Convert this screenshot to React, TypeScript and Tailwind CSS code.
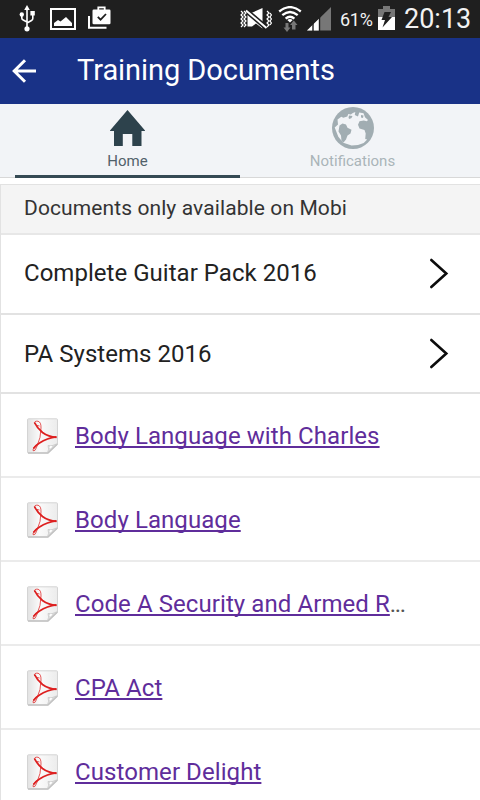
import React from 'react';

const FOLDERS = [
  { id: 'guitar', title: 'Complete Guitar Pack 2016', height: 'h-20 pb-0.5' },
  { id: 'pa', title: 'PA Systems 2016', height: 'h-[79px]' },
];

const DOCUMENTS = [
  { id: 'charles', title: 'Body Language with Charles' },
  { id: 'body', title: 'Body Language' },
  { id: 'code-a', title: 'Code A Security and Armed R', truncated: true },
  { id: 'cpa', title: 'CPA Act' },
  { id: 'delight', title: 'Customer Delight' },
];

function UsbIcon() {
  return (
    <svg className="h-7 w-4" viewBox="0 0 16 28" fill="none" stroke="#fff" strokeWidth="1.6">
      <path d="M8 4v19M2.8 9.5v3.5q0 1.4 1.4 2L8 17M13.8 9v4.5q0 1.3-1.3 2L8 18" />
      <circle cx="8" cy="23.8" r="2.6" fill="#fff" stroke="none" />
      <circle cx="2.8" cy="9.5" r="2.2" fill="#fff" stroke="none" />
      <path d="M8 0l2.8 5H5.2zM11.4 6h4.4v4.4h-4.4z" fill="#fff" stroke="none" />
    </svg>
  );
}

function PictureIcon() {
  return (
    <svg className="h-[22px] w-[26px]" viewBox="0 0 26 22">
      <path d="M1 1h24v20H1z" fill="none" stroke="#fff" strokeWidth="2" />
      <path d="M4 18v-3l4-3 2.5 1.5L16 9l6 6v3z" fill="#fff" />
    </svg>
  );
}

function WorkIcon() {
  return (
    <svg className="h-[23px] w-[23px]" viewBox="0 0 23 23">
      <path d="M1 10v11.7h17.5" fill="none" stroke="#fff" strokeWidth="2" />
      <path d="M10.3 4V1.3h6.4V4" fill="none" stroke="#fff" strokeWidth="1.8" />
      <rect x="4.5" y="3.5" width="18" height="14.8" rx="1.3" fill="#fff" />
      <path d="M9.8 10.8l2.8 2.8 5.4-5.6" fill="none" stroke="#1f1f1f" strokeWidth="1.8" />
    </svg>
  );
}

function MuteVibrateIcon() {
  return (
    <svg className="h-[22px] w-8" viewBox="0 0 32 22" fill="none" stroke="#fff">
      <path d="M7.5 4.5h5L22.5 0v20.5L16 15.5 12 18.5H7.5z" fill="#fff" stroke="none" />
      <path d="M5 1.5L26.5 20" stroke="#1f1f1f" strokeWidth="5" />
      <path d="M6 2.4L26.5 20" strokeWidth="2" />
      <path d="M1 3l2 2-2 2 2 2-2 2 2 2-2 2 2 2-2 2M4 3l2 2-2 2 2 2-2 2 2 2-2 2 2 2-2 2" strokeWidth="1.2" />
      <path d="M27 3l2 2-2 2 2 2-2 2 2 2-2 2 2 2-2 2M30 5l1.4 2L30 9l1.4 2-1.4 2 1.4 2-1.4 2" strokeWidth="1.2" />
    </svg>
  );
}

function WifiIcon() {
  return (
    <svg className="h-[27px] w-6" viewBox="0 0 24 27">
      <g fill="none" stroke="#fff" strokeWidth="2.3">
        <path d="M1.2 5.5Q12-3.3 22.8 5.5" />
        <path d="M4.3 9.2Q12 2.8 19.7 9.2" />
        <path d="M7.6 12.6Q12 8.9 16.4 12.6" />
      </g>
      <path d="M9.3 14q2.7-2 5.4 0L12 16.5z" fill="#fff" />
      <path d="M7.5 17h3v4.5h2L9 26l-3.5-4.5h2zM14 23.5V19h-2l3.8-4.5L19.5 19h-2v4.5z" fill="#777" />
    </svg>
  );
}

function SignalIcon() {
  return (
    <svg className="h-6 w-6" viewBox="0 0 24 24">
      <path d="M0 23.5L24 0v23.5z" fill="#777" />
      <path d="M0 23.5l12.5-12.2v12.2z" fill="#fff" />
      <path d="M6 15v9M12.5 9v15" stroke="#1f1f1f" strokeWidth="1.4" />
    </svg>
  );
}

function BatteryIcon() {
  return (
    <svg className="h-6 w-[17px]" viewBox="0 0 17 24">
      <path d="M5 0h7v3h5v9H0V3h5z" fill="#777" />
      <path d="M0 11h17v13H0z" fill="#fff" />
      <path d="M6.5 6H13l-2.5 5H14L4.5 21.5 7 14H3.5z" fill="#1f1f1f" />
    </svg>
  );
}

function BackIcon() {
  return (
    <svg className="h-6 w-6" viewBox="0 0 24 24" fill="none" stroke="#fff" strokeWidth="3">
      <path d="M24 12H2.5M13 1.2L2.2 12 13 22.8" />
    </svg>
  );
}

function HomeIcon() {
  return (
    <svg className="h-9 w-9" viewBox="0 0 36 36">
      <path d="M17.500 0L35 20.500V21h-3.500v15h-9.200V24h-9.500v12H4V21H0v-.5z" fill="#2d424c" />
    </svg>
  );
}

function GlobeIcon() {
  return (
    <svg className="h-11 w-11" viewBox="0 0 44 44">
      <circle cx="22" cy="22" r="21" fill="#a1adb2" />
      <path
        d="M3.7 21.5L7 18.5l-.5-5 3.8-2.8 2 1 4-1.2 1-2.500 2.500.5 2-1.500 2.500-1-.5 3 3.200 1.500 1.200-4 4.300.8 1.500 4 3 2.700-1.200 1.300-3-.8-4.300.8-1.500 3.400 1.500 3.800 5 1.500 1.200 3.500-.5 5.500 2 .5-3.500 3.500-5.700 2-6.400.6-8.300-2.800-5-6z"
        fill="#f2f4f7"
      />
      {/* South America and the Arctic islands */}
      <path d="M8.5 19.5l3-2 3.5 1 1.5 3.2 4 2-1 3.8-3 2-1.5 4-2.5 3-2-1.5-.5-5.5-2.500-4z" fill="#a1adb2" />
      <path d="M18 9.5l3.5.5-1 2-2 1-1-1zM30 9l2.500.5-.5 2.500-2-.5z" fill="#a1adb2" />
    </svg>
  );
}

function ChevronIcon() {
  return (
    <svg className="h-[31px] w-5" viewBox="0 0 20 31" fill="none" stroke="#0c0c0c" strokeWidth="2.6" strokeLinecap="round">
      <path d="M2.3 2L17.3 15.5 2.3 29" />
    </svg>
  );
}

function PdfIcon() {
  return (
    <svg className="h-9 w-8 shrink-0" viewBox="0 0 32 36">
      <defs>
        <linearGradient id="page" x1="0" y1="0" x2="1" y2="0">
          <stop offset="0" stopColor="#e2e2e2" />
          <stop offset="0.4" stopColor="#fafafa" />
          <stop offset="1" stopColor="#ececec" />
        </linearGradient>
      </defs>
      <path d="M2.5.8h28q1 0 1 1V26L22 35H2.5q-1 0-1-1V1.8q0-1 1-1z" fill="url(#page)" stroke="#d4d4d4" />
      <path d="M2 35h20l9.500-9" fill="none" stroke="#c2c2c2" strokeWidth="1.4" />
      <path d="M21.500 34.500q2-3 .5-7 4 1 8.500-1.500z" fill="#ddd" stroke="#c5c5c5" strokeWidth=".7" />
      <path d="M24 30l1.5-2" stroke="#fff" strokeWidth="1.8" />
      <g fill="none" stroke="#dd1f1f">
        <path d="M13.5 8Q9.500 8 8.500 5.500 8 2.800 12 3.200q3.200.8 3 6.800.3 9-4.500 19.500-1.500 4-3.300 3.300-1-3 5.300-7.300" strokeWidth="1" opacity=".75" />
        <path d="M8.5 4.500Q11 10 16.500 14.500 22.500 19 30.500 19.300" strokeWidth="1.8" />
        <path d="M30.500 18.800Q21 20 13.500 25 9.500 27.500 7.500 30.500" strokeWidth="1.7" />
      </g>
    </svg>
  );
}

function StatusBar() {
  return (
    <div className="flex h-[38px] shrink-0 items-center bg-[#1f1f1f] text-[#f2f2f2]">
      <div className="flex items-center pl-[19px]">
        <UsbIcon />
        <div className="ml-[15px]"><PictureIcon /></div>
        <div className="ml-3 -mt-1"><WorkIcon /></div>
      </div>
      <div className="ml-auto flex items-center pr-[9px]">
        <MuteVibrateIcon />
        <div className="ml-[6px]"><WifiIcon /></div>
        <div className="-mt-px ml-[5px] mr-px"><SignalIcon /></div>
        <span className="ml-[8px] mt-0.5 w-[34px] whitespace-nowrap text-lg tracking-[-0.3px]">61%</span>
        <div className="ml-1 -mt-0.5"><BatteryIcon /></div>
        <span className="ml-[9px] w-[67px] whitespace-nowrap text-[27px] leading-9">20:13</span>
      </div>
    </div>
  );
}

function Tabs() {
  return (
    <nav className="grid h-[74px] shrink-0 grid-cols-[225px_225px] border-b border-[#d8d8d8] bg-[#f2f4f7] pl-[15px] text-[15px] leading-5">
      <div className="flex h-[74px] flex-col items-center border-b-[3px] border-[#354a54] pt-[6px] text-[#51616a]">
        <HomeIcon />
        <span className="mt-[5px]">Home</span>
      </div>
      <div className="flex flex-col items-center pt-[2px] text-[#aab4b9]">
        <GlobeIcon />
        <span className="mt-px">Notifications</span>
      </div>
    </nav>
  );
}

export default function App() {
  return (
    <div className="flex h-[800px] w-[480px] flex-col overflow-hidden bg-white font-['Roboto',sans-serif]">
      <StatusBar />

      <header className="flex h-[66px] shrink-0 items-center bg-[#193287] pl-3 text-white">
        <BackIcon />
        <h1 className="ml-[41px] -mt-0.5 text-[29px] leading-9 tracking-[-0.06px]">Training Documents</h1>
      </header>

      <Tabs />

      {/* Document list */}
      <main className="mt-[6px] min-h-0 flex-1 overflow-hidden border-l border-t border-[#e2e2e2]">
        <h2 className="h-[50px] border-b-2 border-[#e7e7e7] bg-[#f4f4f4] pl-[23px] text-[21px] leading-[47px] tracking-[0.1px] text-[#333]">
          Documents only available on Mobi
        </h2>
        {FOLDERS.map((folder) => (
          <div key={folder.id} className={`flex items-center justify-between border-b-2 border-[#e2e2e2] pl-[23px] pr-[31px] text-[#222] ${folder.height}`}>
            <span className="text-2xl leading-[30px] tracking-[0.03px]">{folder.title}</span>
            <ChevronIcon />
          </div>
        ))}
        {DOCUMENTS.map((doc) => (
          <div key={doc.id} className="flex h-[84px] items-center border-b-2 border-[#ebebeb] pl-[25px] pt-0.5 text-2xl tracking-[0.08px] text-[#555]">
            <PdfIcon />
            <a href="#" className="ml-[17px] text-[#5f2d9b] underline decoration-2 underline-offset-2 [text-decoration-skip-ink:none]">{doc.title}</a>
            {doc.truncated && <span className="tracking-[-1.4px]">...</span>}
          </div>
        ))}
      </main>
    </div>
  );
}
